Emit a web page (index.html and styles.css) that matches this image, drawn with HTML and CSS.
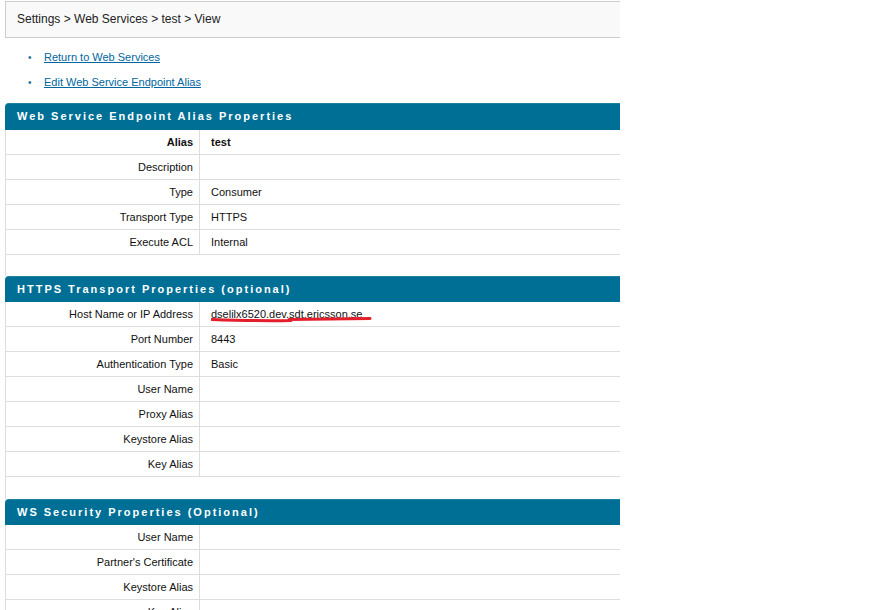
FILE: index.html
```html
<!DOCTYPE html>
<html>
<head>
<meta charset="utf-8">
<link rel="stylesheet" href="styles.css">
</head>
<body>
<div class="page">
  <div class="breadcrumb">Settings &gt; Web Services &gt; test &gt; View</div>
  <ul class="actions">
    <li><a href="#">Return to Web Services</a></li>
    <li><a href="#">Edit Web Service Endpoint Alias</a></li>
  </ul>

  <section class="section first">
    <div class="sec-head">Web Service Endpoint Alias Properties</div>
    <div class="row"><div class="label strong">Alias</div><div class="value strong">test</div></div>
    <div class="row"><div class="label">Description</div><div class="value"></div></div>
    <div class="row"><div class="label">Type</div><div class="value">Consumer</div></div>
    <div class="row"><div class="label">Transport Type</div><div class="value">HTTPS</div></div>
    <div class="row"><div class="label">Execute ACL</div><div class="value">Internal</div></div>
    <div class="spacer"></div>
  </section>

  <section class="section">
    <div class="sec-head">HTTPS Transport Properties (optional)</div>
    <div class="row"><div class="label">Host Name or IP Address</div><div class="value redacted">dselilx6520.dev.sdt.ericsson.se<svg class="scribble" width="170" height="10" viewBox="0 0 170 10"><path d="M1 5.5 C30 6.5 60 7 80 6.5 M78 5.5 C110 5 140 4.5 159 4.5" stroke="#e41f2b" stroke-width="3" fill="none" stroke-linecap="round"/></svg></div></div>
    <div class="row"><div class="label">Port Number</div><div class="value">8443</div></div>
    <div class="row"><div class="label">Authentication Type</div><div class="value">Basic</div></div>
    <div class="row"><div class="label">User Name</div><div class="value"></div></div>
    <div class="row"><div class="label">Proxy Alias</div><div class="value"></div></div>
    <div class="row"><div class="label">Keystore Alias</div><div class="value"></div></div>
    <div class="row"><div class="label">Key Alias</div><div class="value"></div></div>
    <div class="spacer"></div>
  </section>

  <section class="section">
    <div class="sec-head">WS Security Properties (Optional)</div>
    <div class="row"><div class="label">User Name</div><div class="value"></div></div>
    <div class="row"><div class="label">Partner's Certificate</div><div class="value"></div></div>
    <div class="row"><div class="label">Keystore Alias</div><div class="value"></div></div>
    <div class="row"><div class="label">Key Alias</div><div class="value"></div></div>
  </section>
</div>
</body>
</html>
```

FILE: styles.css
```css
html, body {
  margin: 0;
  padding: 0;
  background: #ffffff;
}
body {
  font-family: "Liberation Sans", Arial, sans-serif;
  font-size: 11px;
  color: #000;
  overflow: hidden;
}
.page {
  width: 615px;
  margin-left: 5px;
  padding-top: 1px;
}
.breadcrumb {
  height: 35px;
  line-height: 35px;
  border: 1px solid #cccccc;
  border-right: none;
  background: #f9f9f9;
  padding-left: 11px;
  font-size: 12px;
  color: #222;
}
.actions {
  list-style: none;
  margin: 7px 0 0 0;
  padding: 0 0 0 23px;
}
.actions li {
  height: 25px;
  line-height: 25px;
  display: flex;
  align-items: center;
}
.actions li::before {
  content: "\2022";
  color: #2a6f98;
  font-size: 10px;
  width: 16px;
}
.actions a {
  color: #0066a0;
  text-decoration: underline;
}
.actions + .section {
  margin-top: 8px;
}
.sec-head {
  height: 26px;
  line-height: 26px;
  background: #006f96;
  box-shadow: inset 0 1px 0 rgba(255,255,255,0.12);
  border-top-left-radius: 4px;
  color: #fff;
  font-weight: bold;
  font-size: 11px;
  letter-spacing: 2px;
  padding-left: 12px;
}
.first .sec-head {
  height: 27px;
  line-height: 27px;
}
.row {
  display: flex;
  height: 24px;
  border-bottom: 1px solid #dddddd;
  border-left: 1px solid #dddddd;
  line-height: 24px;
}
.label {
  width: 187px;
  padding-right: 6px;
  text-align: right;
  border-right: 1px solid #dddddd;
  color: #111;
}
.value {
  flex: 1;
  padding-left: 11px;
  color: #111;
  position: relative;
}
.strong {
  font-weight: bold;
}
.spacer {
  height: 22px;
  border-left: 1px solid #dddddd;
}
.first .spacer {
  height: 21px;
}
.scribble {
  position: absolute;
  left: 11px;
  top: 12px;
}
```
